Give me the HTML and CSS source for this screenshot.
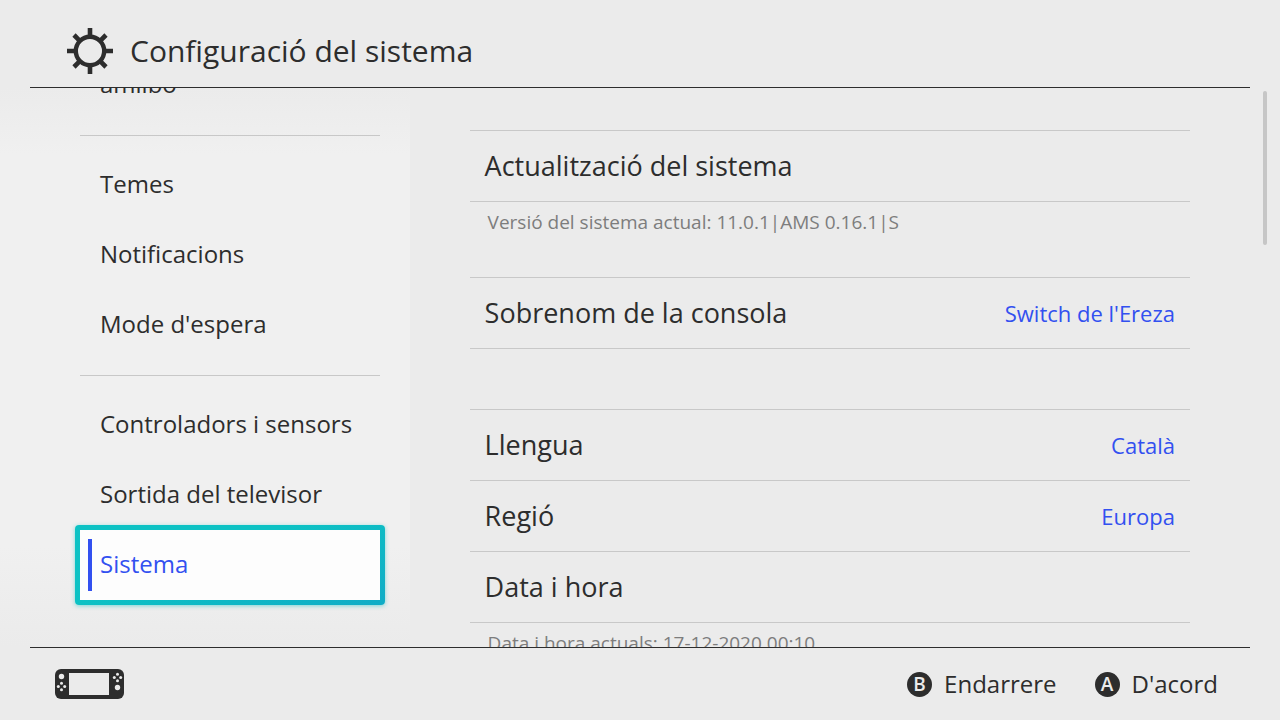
FILE: index.html
```html
<!DOCTYPE html>
<html lang="ca">
<head>
<meta charset="utf-8">
<meta name="viewport" content="width=device-width, initial-scale=1">
<title>Configuració del sistema</title>
<link rel="stylesheet" href="styles.css">
</head>
<body>
<header class="header">
  <svg class="gear" viewBox="0 0 48 48" aria-hidden="true">
    <circle cx="24" cy="24" r="14.200" fill="none" stroke="currentColor" stroke-width="4.400"/>
    <path d="M24 1v8M24 39v8M1 24h8M39 24h8M8 8l5.800 5.800M34.200 34.200l5.800 5.800M40 8l-5.800 5.800M13.800 34.200l-5.800 5.800" stroke="currentColor" stroke-width="4.600"/>
  </svg>
  <h1 class="title">Configuració del sistema</h1>
</header>
<main class="main">
  <nav class="sidebar">
    <ul class="menu">
      <li><button class="menu-item" type="button">amiibo</button></li>
      <li class="menu-separator"></li>
      <li><button class="menu-item" type="button">Temes</button></li>
      <li><button class="menu-item" type="button">Notificacions</button></li>
      <li><button class="menu-item" type="button">Mode d'espera</button></li>
      <li class="menu-separator"></li>
      <li><button class="menu-item" type="button">Controladors i sensors</button></li>
      <li><button class="menu-item" type="button">Sortida del televisor</button></li>
      <li class="focus"><button class="menu-item menu-item-selected" type="button" aria-current="page">Sistema</button></li>
    </ul>
  </nav>
  <section class="content">
    <div class="group">
      <button class="row" type="button"><span>Actualització del sistema</span></button>
      <p class="hint">Versió del sistema actual: 11.0.1|AMS 0.16.1|S</p>
    </div>
    <div class="group">
      <button class="row" type="button"><span>Sobrenom de la consola</span><span class="value">Switch de l'Ereza</span></button>
    </div>
    <div class="group">
      <button class="row" type="button"><span>Llengua</span><span class="value">Català</span></button>
      <button class="row" type="button"><span>Regió</span><span class="value">Europa</span></button>
      <button class="row" type="button"><span>Data i hora</span></button>
      <p class="hint">Data i hora actuals: 17-12-2020 00:10</p>
    </div>
  </section>
  <div class="scrollbar"></div>
</main>
<footer class="footer">
  <svg class="console" viewBox="0 0 69 30" aria-hidden="true">
    <rect width="69" height="30" rx="6" fill="currentColor"/>
    <path class="cutout" d="M14 4h40v22H14z"/>
    <g class="cutout">
      <circle cx="6.500" cy="7.500" r="2.700"/><circle cx="62.500" cy="18.500" r="2.700"/>
      <circle cx="6.500" cy="14.300" r="1.500"/><circle cx="6.500" cy="20.700" r="1.500"/><circle cx="3.300" cy="17.500" r="1.500"/><circle cx="9.700" cy="17.500" r="1.500"/>
      <circle cx="62.500" cy="5.300" r="1.500"/><circle cx="62.500" cy="11.700" r="1.500"/><circle cx="59.300" cy="8.500" r="1.500"/><circle cx="65.700" cy="8.500" r="1.500"/>
    </g>
  </svg>
  <div class="actions">
    <button class="action" type="button"><span class="key">B</span>Endarrere</button>
    <button class="action" type="button"><span class="key">A</span>D'acord</button>
  </div>
</footer>
</body>
</html>
```
FILE: styles.css
```css
:root {
  --bg: #ebebeb;
  --ink: #2d2d2d;
  --line: #c8c8c8;
  --accent: #3250f0;
}

* {
  box-sizing: border-box;
}

body {
  display: flex;
  flex-direction: column;
  height: 100vh;
  margin: 0;
  overflow: hidden;
  background: var(--bg);
  color: var(--ink);
  font-family: "Open Sans", "Noto Sans", sans-serif;
  font-weight: 400;
}

button {
  padding: 0;
  border: 0;
  background: none;
  color: inherit;
  font: inherit;
  text-align: left;
}

.header {
  display: flex;
  align-items: center;
  gap: 16px;
  margin: 0 30px;
  padding: 27px 36px 12px;
  border-bottom: 1px solid var(--ink);
}

.gear {
  width: 48px;
  height: 48px;
}

.title {
  margin: 0;
  font-size: 30px;
  line-height: 48px;
  font-weight: 400;
}

.main {
  display: flex;
  flex: 1;
  min-height: 0;
  overflow: hidden;
}

.sidebar {
  flex: 0 0 32%;
  padding: 0 30px 0 80px;
  background: linear-gradient(#ebebeb, #f0f0f0 12%, #f0f0f0 82%, #ebebeb);
}

.menu {
  margin: -38px 0 0;
  padding: 0;
  list-style: none;
}

.menu-item {
  display: block;
  width: 100%;
  padding: 0 20px 2px;
  font-size: 24px;
  line-height: 68px;
}

.menu-separator {
  height: 30px;
  padding-top: 15px;
}

.menu-separator::before {
  content: "";
  display: block;
  border-top: 1px solid var(--line);
}

.focus {
  margin: -5px;
  padding: 5px;
  border-radius: 4px;
  background: linear-gradient(160deg, #0cc2c4 40%, #10acc6);
  box-shadow: 0 1px 4px #10c0c080;
}

.menu-item-selected {
  display: flex;
  align-items: center;
  gap: 8px;
  padding: 0 8px 2px;
  background: #fdfdfd;
  color: var(--accent);
}

.menu-item-selected::before {
  content: "";
  width: 4px;
  height: 52px;
  margin-top: 2px;
  background: var(--accent);
}

.content {
  display: flex;
  flex: 1;
  flex-direction: column;
  gap: 60px;
  padding: 42px 73px 0 60px;
}

.group {
  border-top: 1px solid var(--line);
}

.row {
  display: flex;
  align-items: center;
  justify-content: space-between;
  width: 100%;
  padding: 0 15px;
  border-bottom: 1px solid var(--line);
  font-size: 27px;
  line-height: 70px;
}

.value {
  color: var(--accent);
  font-size: 22px;
}

.hint {
  height: 15px;
  margin: 0;
  padding: 6px 18px;
  color: #7d7d7d;
  font-size: 19px;
  line-height: 28px;
}

.scrollbar {
  width: 4px;
  height: 154px;
  margin: 3px 13px 0 0;
  border-radius: 2px;
  background: #c6c6c6;
}

.footer {
  display: flex;
  align-items: center;
  justify-content: space-between;
  height: 73px;
  margin: 0 30px;
  padding: 0 32px 0 25px;
  border-top: 1px solid var(--ink);
}

.console {
  width: 69px;
  height: 30px;
}

.cutout {
  fill: var(--bg);
}

.actions {
  display: flex;
  gap: 38px;
}

.action {
  display: flex;
  align-items: center;
  gap: 12px;
  font-size: 24px;
  line-height: 36px;
}

.key {
  width: 25px;
  border-radius: 50%;
  background: var(--ink);
  color: var(--bg);
  font-size: 19px;
  line-height: 25px;
  font-weight: 600;
  text-align: center;
}
```
